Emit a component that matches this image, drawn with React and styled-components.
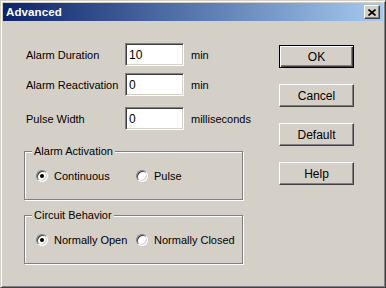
import React from 'react';
import styled, { createGlobalStyle } from 'styled-components';

const GlobalStyle = createGlobalStyle`
  html, body {
    margin: 0;
    padding: 0;
    background: #d4d0c8;
  }
  body {
    font-family: "Liberation Sans", Arial, sans-serif;
    font-size: 11px;
    color: #000;
  }
`;

const Window = styled.div`
  box-sizing: border-box;
  width: 386px;
  height: 288px;
  background: #d4d0c8;
  border-top: 1px solid #d4d0c8;
  border-left: 1px solid #d4d0c8;
  border-right: 1px solid #404040;
  border-bottom: 1px solid #404040;
  box-shadow: inset 1px 1px #ffffff, inset -1px -1px #808080;
  padding: 2px;
  display: flex;
  flex-direction: column;
`;

const TitleBar = styled.div`
  height: 18px;
  display: flex;
  align-items: center;
  justify-content: space-between;
  padding: 0 3px 0 3px;
  background: linear-gradient(to right, #0a246a, #a6caf0);
`;

const Title = styled.span`
  color: #fff;
  font-weight: bold;
  font-size: 11.5px;
  letter-spacing: 0.1px;
`;

const CloseButton = styled.div`
  box-sizing: border-box;
  width: 16px;
  height: 14px;
  background: #d4d0c8;
  border-top: 1px solid #fff;
  border-left: 1px solid #fff;
  border-right: 1px solid #404040;
  border-bottom: 1px solid #404040;
  box-shadow: inset -1px -1px #808080;
  display: flex;
  align-items: center;
  justify-content: center;
`;

const Body = styled.div`
  flex: 1;
  display: flex;
  padding-left: 21px;
`;

const LeftColumn = styled.div`
  width: 219px;
  flex-shrink: 0;
  padding-top: 22px;
  display: flex;
  flex-direction: column;
`;

const Row = styled.div`
  display: flex;
  align-items: center;
  height: 23px;
  padding-left: 2px;
  margin-top: ${p => p.$mt || 0}px;
  white-space: nowrap;
`;

const Label = styled.span`
  width: 99px;
  flex-shrink: 0;
`;

const Input = styled.div`
  box-sizing: border-box;
  flex-shrink: 0;
  width: 59px;
  height: 23px;
  background: #fff;
  border-top: 1px solid #808080;
  border-left: 1px solid #808080;
  border-right: 1px solid #fff;
  border-bottom: 1px solid #fff;
  box-shadow: inset 1px 1px #404040, inset -1px -1px #d4d0c8;
  padding: 0 3px;
  display: flex;
  align-items: center;
  font-size: 12px;
`;

const Unit = styled.span`
  margin-left: 7px;
`;

const Group = styled.div`
  position: relative;
  box-sizing: border-box;
  height: 49px;
  margin-top: ${p => p.$mt}px;
  border: 1px solid #808080;
  box-shadow: inset 1px 1px #fff, 1px 1px #fff;
  padding: 0 0 0 11px;
  display: flex;
  align-items: center;
`;

const Legend = styled.span`
  position: absolute;
  top: -8px;
  left: 7px;
  padding: 0 2px;
  background: #d4d0c8;
  line-height: 14px;
`;

const RadioItem = styled.label`
  display: flex;
  align-items: center;
  width: ${p => p.$w || 'auto'};
  gap: 6px;
  white-space: nowrap;
`;

const RadioCircle = styled.span`
  box-sizing: border-box;
  width: 12px;
  height: 12px;
  border-radius: 50%;
  background: #fff;
  border-top: 1px solid #808080;
  border-left: 1px solid #808080;
  border-right: 1px solid #fff;
  border-bottom: 1px solid #fff;
  box-shadow: inset 1px 1px #404040, inset -1px -1px #d4d0c8;
  display: flex;
  align-items: center;
  justify-content: center;

  &::after {
    content: '';
    width: 4px;
    height: 4px;
    border-radius: 50%;
    background: ${p => (p.$checked ? '#000' : 'transparent')};
  }
`;

const RightColumn = styled.div`
  margin-left: 36px;
  padding-top: 24px;
  display: flex;
  flex-direction: column;
  gap: 16px;
`;

const Button = styled.div`
  box-sizing: border-box;
  width: 75px;
  height: 23px;
  background: #d4d0c8;
  display: flex;
  align-items: center;
  justify-content: center;
  border-top: 1px solid ${p => (p.$default ? '#000' : '#fff')};
  border-left: 1px solid ${p => (p.$default ? '#000' : '#fff')};
  border-right: 1px solid ${p => (p.$default ? '#000' : '#404040')};
  border-bottom: 1px solid ${p => (p.$default ? '#000' : '#404040')};
  box-shadow: ${p =>
    p.$default
      ? 'inset 1px 1px #fff, inset -1px -1px #404040, inset -2px -2px #808080'
      : 'inset -1px -1px #808080'};
  font-size: 12px;
`;

const Radio = ({ checked, width, children }) => (
  <RadioItem $w={width}>
    <RadioCircle $checked={checked} />
    <span>{children}</span>
  </RadioItem>
);

const App = () => (
  <>
    <GlobalStyle />
    <Window>
      <TitleBar>
        <Title>Advanced</Title>
        <CloseButton>
          <svg width="8" height="7" viewBox="0 0 8 7">
            <path d="M0.5 0.5 L7.5 6.5 M7.5 0.5 L0.5 6.5" stroke="#000" strokeWidth="1.6" />
          </svg>
        </CloseButton>
      </TitleBar>
      <Body>
        <LeftColumn>
          <Row>
            <Label>Alarm Duration</Label>
            <Input>10</Input>
            <Unit>min</Unit>
          </Row>
          <Row $mt={7}>
            <Label>Alarm Reactivation</Label>
            <Input>0</Input>
            <Unit>min</Unit>
          </Row>
          <Row $mt={11}>
            <Label>Pulse Width</Label>
            <Input>0</Input>
            <Unit>milliseconds</Unit>
          </Row>
          <Group $mt={21}>
            <Legend>Alarm Activation</Legend>
            <Radio checked width="100px">Continuous</Radio>
            <Radio>Pulse</Radio>
          </Group>
          <Group $mt={15}>
            <Legend>Circuit Behavior</Legend>
            <Radio checked width="100px">Normally Open</Radio>
            <Radio>Normally Closed</Radio>
          </Group>
        </LeftColumn>
        <RightColumn>
          <Button $default>OK</Button>
          <Button>Cancel</Button>
          <Button>Default</Button>
          <Button>Help</Button>
        </RightColumn>
      </Body>
    </Window>
  </>
);

export default App;
